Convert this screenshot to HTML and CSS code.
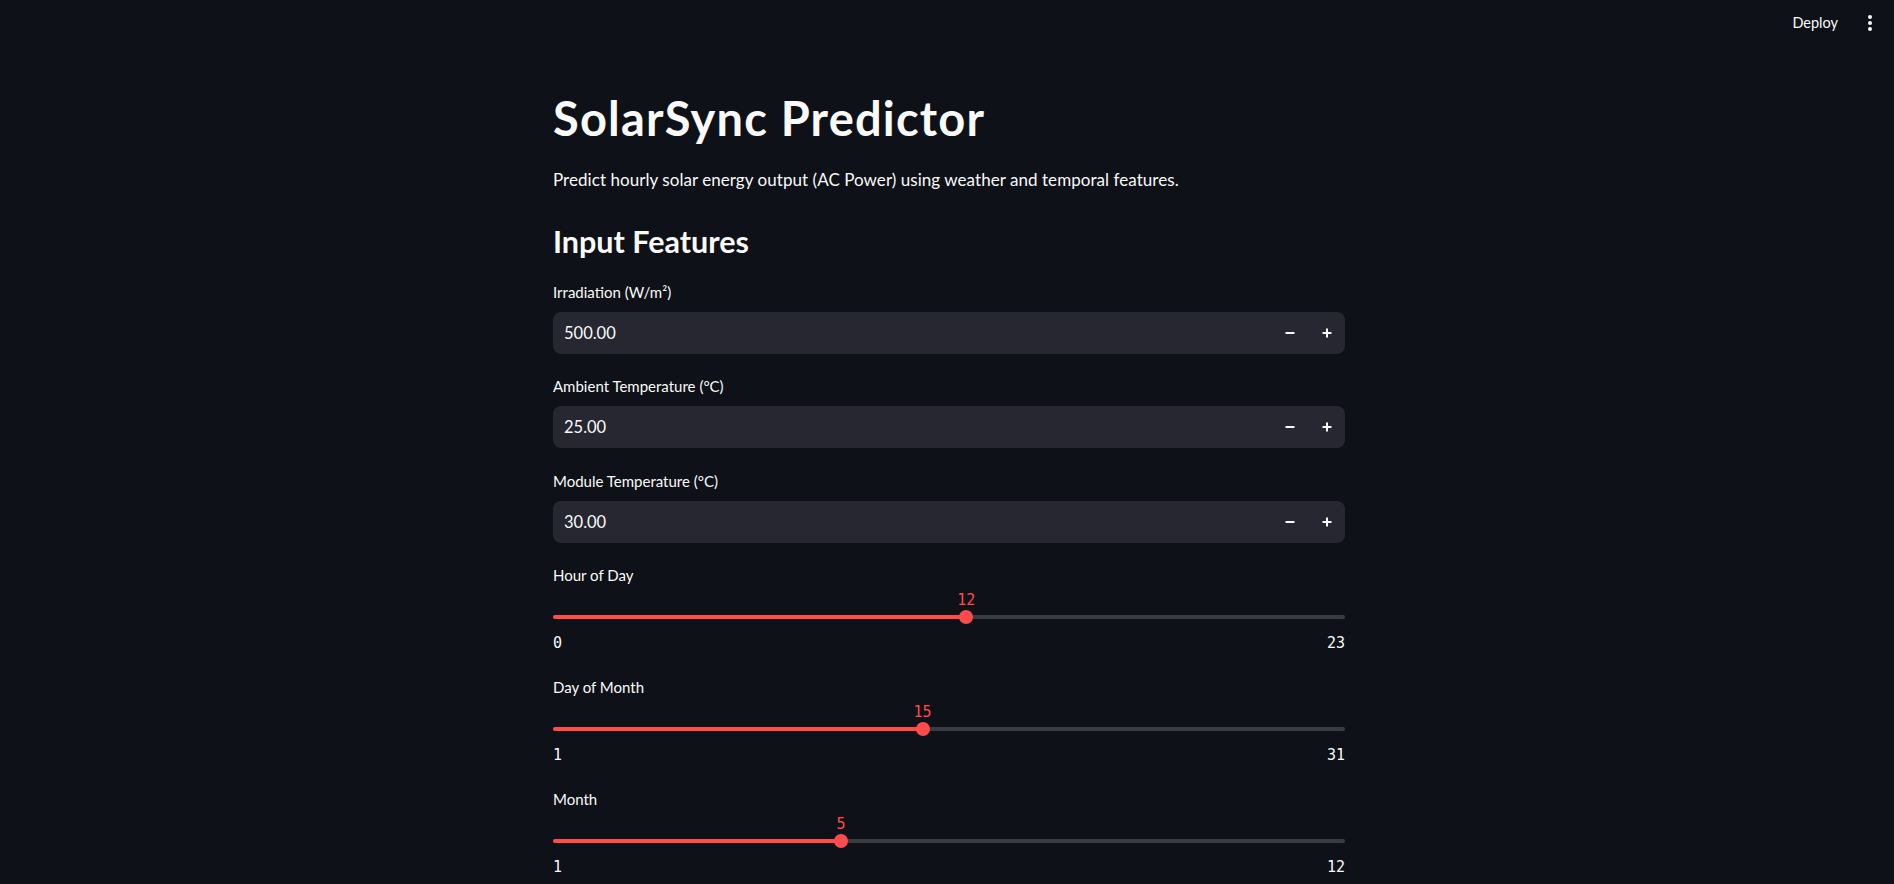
FILE: index.html
```html
<!DOCTYPE html>
<html lang="en">
<head>
<meta charset="utf-8">
<title>SolarSync Predictor</title>
<link rel="stylesheet" href="styles.css">
</head>
<body>
<header class="topbar">
  <span class="deploy">Deploy</span>
  <span class="kebab">
    <svg width="6" height="18" viewBox="0 0 6 18"><circle cx="3" cy="3" r="2" fill="#fafafa"/><circle cx="3" cy="9" r="2" fill="#fafafa"/><circle cx="3" cy="15" r="2" fill="#fafafa"/></svg>
  </span>
</header>
<main class="main">
  <h1 class="title">SolarSync Predictor</h1>
  <p class="subtitle">Predict hourly solar energy output (AC Power) using weather and temporal features.</p>
  <h2 class="header">Input Features</h2>

  <section class="widgets">
    <div class="field">
      <label class="label">Irradiation (W/m²)</label>
      <div class="numbox">
        <span class="numval">500.00</span>
        <span class="steps">
          <svg class="step" width="10" height="10" viewBox="0 0 10 10"><rect x="0.5" y="4" width="9" height="2" fill="#fafafa"/></svg>
          <svg class="step" width="10" height="10" viewBox="0 0 10 10"><rect x="0.5" y="4" width="9" height="2" fill="#fafafa"/><rect x="4" y="0.5" width="2" height="9" fill="#fafafa"/></svg>
        </span>
      </div>
    </div>

    <div class="field">
      <label class="label">Ambient Temperature (°C)</label>
      <div class="numbox">
        <span class="numval">25.00</span>
        <span class="steps">
          <svg class="step" width="10" height="10" viewBox="0 0 10 10"><rect x="0.5" y="4" width="9" height="2" fill="#fafafa"/></svg>
          <svg class="step" width="10" height="10" viewBox="0 0 10 10"><rect x="0.5" y="4" width="9" height="2" fill="#fafafa"/><rect x="4" y="0.5" width="2" height="9" fill="#fafafa"/></svg>
        </span>
      </div>
    </div>

    <div class="field">
      <label class="label">Module Temperature (°C)</label>
      <div class="numbox">
        <span class="numval">30.00</span>
        <span class="steps">
          <svg class="step" width="10" height="10" viewBox="0 0 10 10"><rect x="0.5" y="4" width="9" height="2" fill="#fafafa"/></svg>
          <svg class="step" width="10" height="10" viewBox="0 0 10 10"><rect x="0.5" y="4" width="9" height="2" fill="#fafafa"/><rect x="4" y="0.5" width="2" height="9" fill="#fafafa"/></svg>
        </span>
      </div>
    </div>

    <div class="slider">
      <label class="label">Hour of Day</label>
      <div class="track-wrap">
        <div class="track">
          <div class="fill" style="width:52.17%"></div>
          <div class="thumb" style="left:52.17%"><span class="thumb-val">12</span></div>
        </div>
      </div>
      <div class="ticks"><span>0</span><span>23</span></div>
    </div>

    <div class="slider">
      <label class="label">Day of Month</label>
      <div class="track-wrap">
        <div class="track">
          <div class="fill" style="width:46.67%"></div>
          <div class="thumb" style="left:46.67%"><span class="thumb-val">15</span></div>
        </div>
      </div>
      <div class="ticks"><span>1</span><span>31</span></div>
    </div>

    <div class="slider">
      <label class="label">Month</label>
      <div class="track-wrap">
        <div class="track">
          <div class="fill" style="width:36.36%"></div>
          <div class="thumb" style="left:36.36%"><span class="thumb-val">5</span></div>
        </div>
      </div>
      <div class="ticks"><span>1</span><span>12</span></div>
    </div>
  </section>
</main>
</body>
</html>
```
FILE: styles.css
```css
html, body {
  margin: 0;
  padding: 0;
  background: #0e1117;
  color: #fafafa;
  font-family: Lato, "Noto Sans", sans-serif;
  height: 100%;
  overflow: hidden;
}

.topbar {
  height: 45px;
  display: flex;
  align-items: center;
  justify-content: flex-end;
  gap: 29px;
  padding-right: 21px;
}

.deploy {
  font-size: 14.5px;
  color: #fafafa;
}

.kebab {
  display: flex;
  align-items: center;
  padding-top: 1px;
}

.main {
  width: 792px;
  margin-left: calc(50% - 394px);
  padding-top: 45px;
  display: flex;
  flex-direction: column;
}

.title {
  margin: 0;
  font-size: 47px;
  font-weight: 700;
  line-height: 1.2;
  letter-spacing: 1.2px;
}

.subtitle {
  margin: 21px 0 0;
  font-size: 17px;
  line-height: 25.6px;
  letter-spacing: 0.05px;
}

.header {
  margin: 30px 0 0;
  font-size: 30.5px;
  font-weight: 700;
  line-height: 36px;
}

.widgets {
  display: flex;
  flex-direction: column;
  gap: 22.5px;
  margin-top: 23px;
}

.field {
  display: flex;
  flex-direction: column;
  gap: 10px;
}

.label {
  font-size: 15px;
  line-height: 20px;
}

.numbox {
  height: 42px;
  background: #262730;
  border-radius: 8px;
  display: flex;
  align-items: center;
  justify-content: space-between;
  padding: 0 13px 0 11px;
}

.numval {
  font-size: 16.5px;
}

.steps {
  display: flex;
  align-items: center;
  gap: 27px;
}

.step {
  display: block;
}

.slider {
  display: flex;
  flex-direction: column;
}

.slider:first-of-type {
  margin-top: 1.5px;
}

.track-wrap {
  padding: 29.5px 0 14.5px;
}

.track {
  position: relative;
  height: 4px;
  border-radius: 2px;
  background: #3a3c44;
}

.fill {
  height: 4px;
  border-radius: 2px;
  background: #ff4b4b;
}

.thumb {
  position: absolute;
  top: 50%;
  width: 14px;
  height: 14px;
  margin-left: -7px;
  margin-top: -7px;
  border-radius: 50%;
  background: #ff4b4b;
}

.thumb-val {
  position: absolute;
  left: 50%;
  bottom: 100%;
  margin-bottom: -0.5px;
  transform: translateX(-50%);
  font-family: "DejaVu Sans Mono", "Liberation Mono", monospace;
  font-size: 15px;
  line-height: 20px;
  color: #ff4b4b;
}

.ticks {
  display: flex;
  justify-content: space-between;
  padding-bottom: 1.5px;
  font-family: "DejaVu Sans Mono", "Liberation Mono", monospace;
  font-size: 15px;
  line-height: 20px;
  color: #fafafa;
}
```
